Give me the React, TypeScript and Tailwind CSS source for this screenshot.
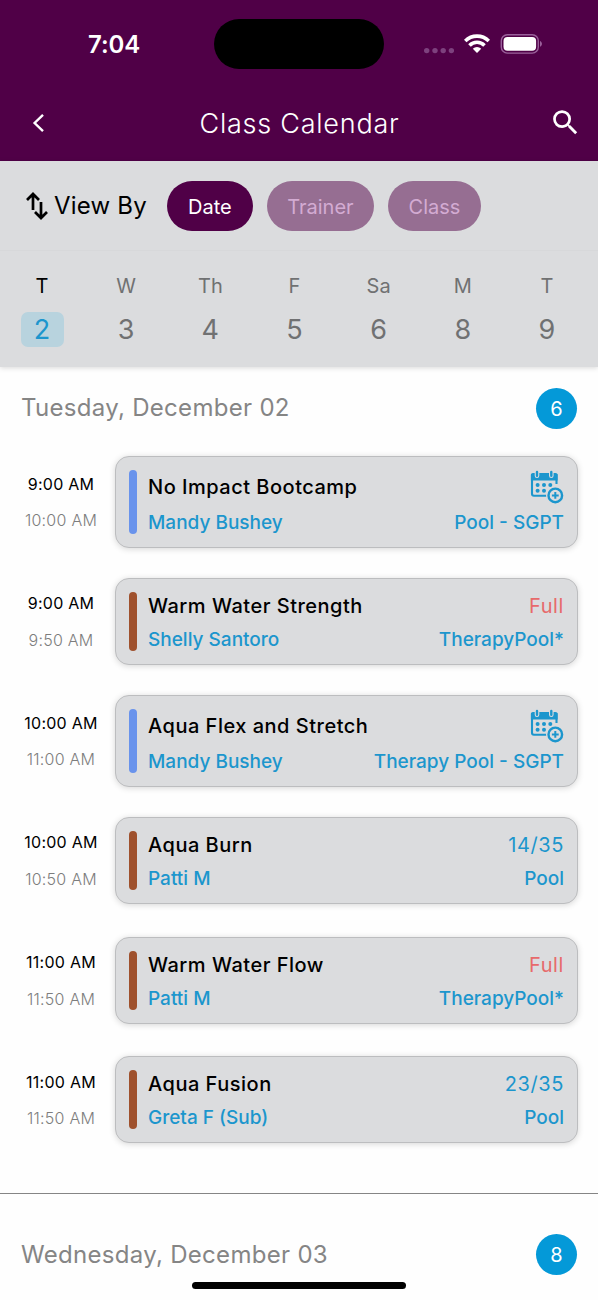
import { MdSearch } from "react-icons/md"

type GymClass = {
  start: string
  end: string
  name: string
  trainer: string
  room: string
  color: string
  spots?: string
  full?: boolean
}

const days = [
  { label: "T", day: 2, active: true },
  { label: "W", day: 3 },
  { label: "Th", day: 4 },
  { label: "F", day: 5 },
  { label: "Sa", day: 6 },
  { label: "M", day: 8 },
  { label: "T", day: 9 },
]

const classes: GymClass[] = [
  { start: "9:00 AM", end: "10:00 AM", name: "No Impact Bootcamp", trainer: "Mandy Bushey", room: "Pool - SGPT", color: "bg-[#6993ec]" },
  { start: "9:00 AM", end: "9:50 AM", name: "Warm Water Strength", trainer: "Shelly Santoro", room: "TherapyPool*", color: "bg-[#9f512d]", spots: "Full", full: true },
  { start: "10:00 AM", end: "11:00 AM", name: "Aqua Flex and Stretch", trainer: "Mandy Bushey", room: "Therapy Pool - SGPT", color: "bg-[#6993ec]" },
  { start: "10:00 AM", end: "10:50 AM", name: "Aqua Burn", trainer: "Patti M", room: "Pool", color: "bg-[#9f512d]", spots: "14/35" },
  { start: "11:00 AM", end: "11:50 AM", name: "Warm Water Flow", trainer: "Patti M", room: "TherapyPool*", color: "bg-[#9f512d]", spots: "Full", full: true },
  { start: "11:00 AM", end: "11:50 AM", name: "Aqua Fusion", trainer: "Greta F (Sub)", room: "Pool", color: "bg-[#9f512d]", spots: "23/35" },
]

function CalendarPlus() {
  return (
    <svg width="34" height="34" viewBox="0 0 34 34" fill="none" className="text-[#1c96cd]">
      <path d="M26.5 14V5H2v18.8a2 2 0 0 0 2 2h12.5" stroke="currentColor" strokeWidth="2.1" />
      <path d="M.9 10.4V5a2 2 0 0 1 2-2h22.7a2 2 0 0 1 2 2v5.4z" fill="currentColor" />
      <path d="M7 1.8v4M21.3 1.8v4" stroke="#dbdcde" strokeWidth="4.6" strokeLinecap="round" />
      <path d="M7 1.9v3.9M21.3 1.9v3.9" stroke="currentColor" strokeWidth="2.4" strokeLinecap="round" />
      <g fill="currentColor">
        <circle cx="7.6" cy="14.9" r="2" />
        <circle cx="14" cy="14.9" r="2" />
        <circle cx="20.3" cy="14.9" r="2" />
        <circle cx="7.6" cy="20.8" r="2" />
        <circle cx="14" cy="20.8" r="2" />
      </g>
      <circle cx="25.3" cy="25.4" r="9.2" fill="#dbdcde" />
      <circle cx="25.3" cy="25.4" r="6.8" stroke="currentColor" strokeWidth="2.4" />
      <path d="M25.3 22v6.8M21.9 25.4h6.8" stroke="currentColor" strokeWidth="2" />
    </svg>
  )
}

function StatusBar() {
  return (
    <div className="flex h-[88px] items-start">
      <div className="w-[214px] pt-[29px] pl-[88px] text-[24px] leading-[32px] font-semibold tracking-[-0.1px]">7:04</div>
      <div className="mt-[19px] h-[50px] w-[170px] rounded-full bg-black" />
      <div className="mt-[33px] ml-[40px] flex items-start">
        <svg width="30" height="22" viewBox="0 0 30 22" fill="#7d417e">
          <circle cx="2.7" cy="17.6" r="2.7" />
          <circle cx="11" cy="17.6" r="2.7" />
          <circle cx="19.2" cy="17.6" r="2.7" />
          <circle cx="27.4" cy="17.6" r="2.7" />
        </svg>
        <svg width="26" height="20" viewBox="0 0 26 20" className="ml-[10px]" fill="none" stroke="white" strokeWidth="3.6">
          <path d="M1.2 8a16.7 16.7 0 0 1 23.6 0" />
          <path d="M5.5 12.4a10.6 10.6 0 0 1 15 0" />
          <path d="M13 20l-4.2-4.3a6 6 0 0 1 8.4 0z" fill="white" stroke="none" />
        </svg>
        <svg width="43" height="21" viewBox="0 0 43 21" fill="none" className="ml-[10px]">
          <rect x="1.3" y="1.7" width="37" height="18.4" rx="6" stroke="#9a609b" strokeWidth="1.4" />
          <rect x="3.5" y="4" width="32.6" height="13.8" rx="4" fill="white" />
          <path d="M40 8v5.8c2.6-1 2.6-4.8 0-5.8z" fill="#9a609b" />
        </svg>
      </div>
    </div>
  )
}

function DayTitle({ title, count }: { title: string; count: number }) {
  return (
    <div className="flex h-[42px] items-center justify-between pr-[21px] pl-[21px]">
      <h2 className="text-[24px] tracking-[0.3px] text-[#858585]">{title}</h2>
      <span className="flex size-[41px] items-center justify-center rounded-full bg-[#0499d8] pt-px text-[20px] text-white">{count}</span>
    </div>
  )
}

function ClassRow({ item }: { item: GymClass }) {
  return (
    <div className="flex h-[119.6px] items-center pr-[20px]">
      <div className="flex w-[115px] flex-col items-center pt-[1px] pl-[7px] text-[16px] leading-[36.6px] tracking-[0.25px]">
        <span className="text-black">{item.start}</span>
        <span className="font-light text-[#7d7d7d]">{item.end}</span>
      </div>
      <div className={`flex flex-1 rounded-[14px] border border-[#bcbdbf] bg-[#dbdcde] p-[13px] shadow-[0_1px_6px_rgba(0,0,0,0.16)] ${item.spots ? "h-[87px]" : "h-[92px]"}`}>
        <div className={`w-[8px] rounded-full ${item.color}`} />
        <div className="-mb-px ml-[11px] flex flex-1 flex-col justify-between text-[19px] text-[#1c96cd]">
          <div className="flex items-start justify-between leading-[28px]">
            <span className={`text-[20px] font-[450] tracking-[0.5px] text-black ${item.spots ? "" : "pt-[3px]"}`}>{item.name}</span>
            {item.spots ? (
              <span className={`text-[20px] tracking-[0.6px] ${item.full ? "text-[#e76a6b]" : ""}`}>{item.spots}</span>
            ) : (
              <CalendarPlus />
            )}
          </div>
          <div className="flex justify-between leading-[24px] font-[450]">
            <span>{item.trainer}</span>
            <span>{item.room}</span>
          </div>
        </div>
      </div>
    </div>
  )
}

export default function App() {
  return (
    <div className="relative h-[1300px] w-[598px] overflow-hidden bg-[#fefefe] font-[Inter,sans-serif]">
      <header className="h-[161px] bg-[#500047] text-white">
        <StatusBar />
        <div className="flex h-[70px] items-center justify-between pr-[16px] pl-[32px]">
          <svg width="14" height="20" viewBox="0 0 14 20" fill="none" stroke="white" strokeWidth="2.4">
            <path d="M11 1.8L2.6 10l8.4 8.2" />
          </svg>
          <h1 className="pt-[2px] pl-[4px] text-[27px] font-light tracking-[0.75px]">Class Calendar</h1>
          <MdSearch size={33} className="mb-[2px]" />
        </div>
      </header>

      <section className="relative h-[206px] bg-[#dbdcde] shadow-[0_1px_5px_rgba(0,0,0,0.15)]">
        <div className="flex h-[90px] items-center border-b border-[#d7d8da] pt-[1px] pl-[25px]">
          <svg width="24" height="28" viewBox="0 0 24 28" fill="none" stroke="black" strokeWidth="2.7">
            <path d="M8 18V2.5M2 8l6-6 6 6" />
            <path d="M16 10v15.5M10 20l6 6 6-6" />
          </svg>
          <span className="ml-[5px] text-[24px] tracking-[0.2px]">View By</span>
          <div className="ml-[20px] flex gap-[14px] text-[20px]">
            <button className="h-[50px] w-[86px] rounded-full bg-[#500047] pt-px text-white">Date</button>
            <button className="h-[50px] w-[107px] rounded-full bg-[#966e92] pt-px text-[#d3abd2]">Trainer</button>
            <button className="h-[50px] w-[93px] rounded-full bg-[#966e92] pt-px text-[#d3abd2]">Class</button>
          </div>
        </div>
        <div className="grid grid-cols-7 pt-[20px] pr-[9px]">
          {days.map(d => (
            <div key={d.day} className={`flex flex-col items-center ${d.active ? "text-black" : "text-[#707172]"}`}>
              <span className="text-[20px] leading-[30px]">{d.label}</span>
              <span className={`mt-[11px] flex h-[35px] w-[43px] items-center justify-center rounded-[7px] pt-[2px] text-[27px] ${d.active ? "bg-[#b8d3de] text-[#1c96cd]" : ""}`}>
                {d.day}
              </span>
            </div>
          ))}
        </div>
      </section>

      <main>
        <div className="border-b border-[#858585] pt-[20px] pb-[33px]">
          <DayTitle title="Tuesday, December 02" count={6} />
          <div className="mt-[13px]">
            {classes.map(c => (
              <ClassRow key={c.name} item={c} />
            ))}
          </div>
        </div>
        <div className="pt-[40px]">
          <DayTitle title="Wednesday, December 03" count={8} />
        </div>
      </main>

      <div className="absolute bottom-[11px] left-[192px] h-[7px] w-[214px] rounded-full bg-black" />
    </div>
  )
}
